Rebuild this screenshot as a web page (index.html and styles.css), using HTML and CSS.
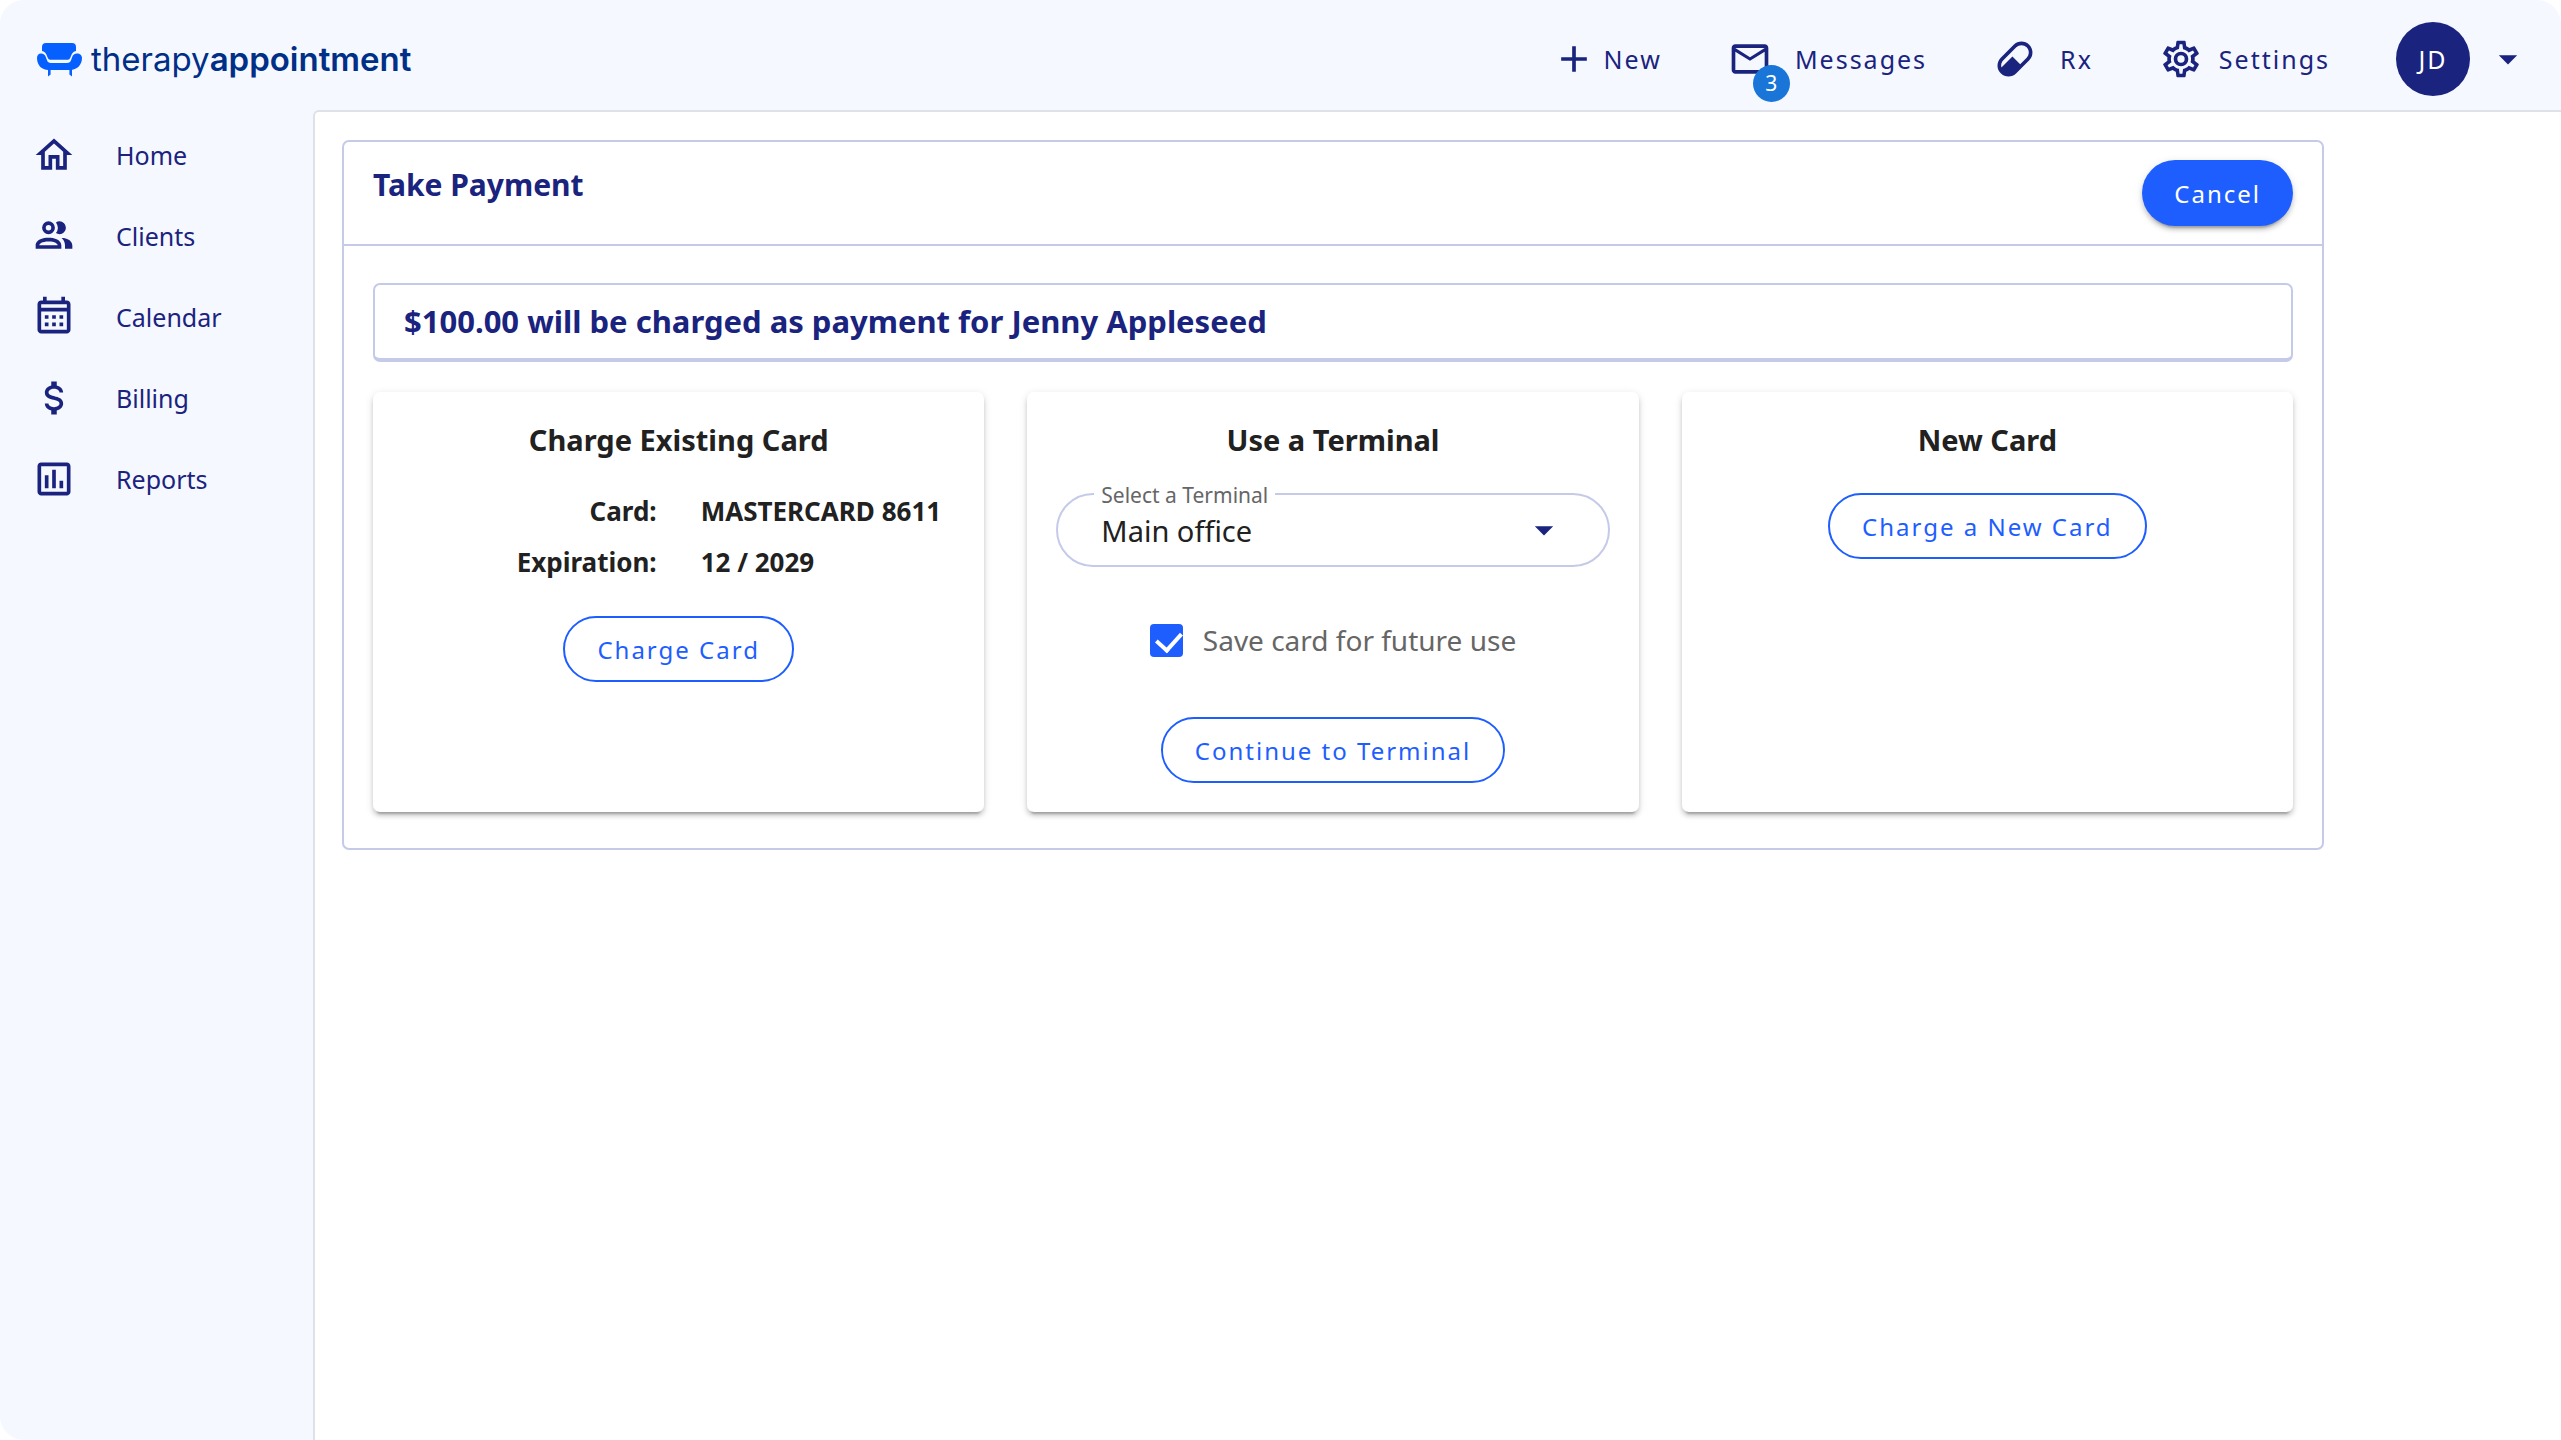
FILE: index.html
```html
<!DOCTYPE html>
<html lang="en">
<head>
  <meta charset="UTF-8" />
  <meta name="viewport" content="width=device-width, initial-scale=1.0" />
  <title>Take Payment - therapyappointment</title>
  <link rel="stylesheet" href="styles.css">
</head>
<body>
  <div class="app">
    <header class="topbar">
      <a href="#home" class="logo">
        <svg class="logo-mark" viewBox="0 0 47 35">
          <path d="M10 1h26a4 4 0 0 1 4 4v4c-2.500.6-3.800 2-4.800 4.500l-1 2.500a2.500 2.500 0 0 1-2.400 1.700H14.200a2.500 2.500 0 0 1-2.400-1.700l-1-2.500C9.800 11 8.500 9.600 6 9V5a4 4 0 0 1 4-4z"/>
          <path d="M5 11.500c2.600 0 4 1.200 4.800 3.500l1.200 3.200c.7 2 1.700 2.700 4 2.700h16c2.300 0 3.300-.7 4-2.700l1.200-3.200c.8-2.300 2.200-3.500 4.800-3.500 3 0 5 2 5 4.500C46 23 41 28 34 28H12.500C5.500 28 1 23 1 16c0-2.500 1.500-4.500 4-4.500z"/>
          <path d="M12 27h2.600v5.500L12 34.500zM36 27h-2.600v5.500l2.600 2z"/>
        </svg>
        <span>therapy<b>appointment</b></span>
      </a>

      <nav class="topnav">
        <a href="#new" class="snug">
          <svg class="icon" viewBox="0 0 24 24"><path d="M19,13H13V19H11V13H5V11H11V5H13V11H19V13Z"/></svg>
          New
        </a>
        <a href="#messages" class="loose">
          <span class="badge-wrap">
            <svg class="icon" viewBox="0 0 24 24"><path d="M22 6C22 4.900 21.100 4 20 4H4C2.900 4 2 4.900 2 6V18C2 19.100 2.900 20 4 20H20C21.100 20 22 19.100 22 18V6M20 6L12 11L4 6H20M20 18H4V8L12 13L20 8V18Z"/></svg>
            <span class="badge">3</span>
          </span>
          Messages
        </a>
        <a href="#rx" class="loose">
          <svg class="icon" viewBox="0 0 24 24"><path d="M4.220,11.290L11.290,4.220C13.640,1.880 17.430,1.880 19.780,4.220C22.120,6.560 22.120,10.360 19.780,12.710L12.710,19.780C10.360,22.120 6.560,22.120 4.220,19.780C1.880,17.430 1.880,13.640 4.220,11.290M5.640,12.710C4.590,13.750 4.240,15.240 4.600,16.570L10.590,10.590L14.830,14.830L18.360,11.290C19.930,9.730 19.930,7.200 18.360,5.640C16.800,4.070 14.270,4.070 12.710,5.640L5.640,12.710Z"/></svg>
          Rx
        </a>
        <a href="#settings">
          <svg class="icon" viewBox="0 0 24 24"><path d="M12,8A4,4 0 0,1 16,12A4,4 0 0,1 12,16A4,4 0 0,1 8,12A4,4 0 0,1 12,8M12,10A2,2 0 0,0 10,12A2,2 0 0,0 12,14A2,2 0 0,0 14,12A2,2 0 0,0 12,10M10,22C9.750,22 9.540,21.820 9.500,21.580L9.130,18.930C8.500,18.680 7.960,18.340 7.440,17.940L4.950,18.950C4.730,19.030 4.460,18.950 4.340,18.730L2.340,15.270C2.210,15.050 2.270,14.780 2.460,14.630L4.570,12.970L4.500,12L4.570,11L2.460,9.370C2.270,9.220 2.210,8.950 2.340,8.730L4.340,5.270C4.460,5.050 4.730,4.960 4.950,5.050L7.440,6.050C7.960,5.660 8.500,5.320 9.130,5.070L9.500,2.420C9.540,2.180 9.750,2 10,2H14C14.250,2 14.460,2.180 14.500,2.420L14.870,5.070C15.500,5.320 16.040,5.660 16.560,6.050L19.050,5.050C19.270,4.960 19.540,5.050 19.660,5.270L21.660,8.730C21.790,8.950 21.730,9.220 21.540,9.370L19.430,11L19.500,12L19.430,13L21.540,14.630C21.730,14.780 21.790,15.050 21.660,15.270L19.660,18.730C19.540,18.950 19.270,19.040 19.050,18.950L16.560,17.950C16.040,18.340 15.500,18.680 14.870,18.930L14.500,21.580C14.460,21.820 14.250,22 14,22H10M11.250,4L10.880,6.610C9.680,6.860 8.620,7.500 7.850,8.390L5.440,7.350L4.690,8.650L6.800,10.200C6.400,11.370 6.400,12.640 6.800,13.800L4.680,15.360L5.430,16.660L7.860,15.620C8.630,16.500 9.680,17.140 10.870,17.380L11.240,20H12.760L13.130,17.390C14.320,17.140 15.370,16.500 16.140,15.620L18.570,16.660L19.320,15.360L17.200,13.810C17.600,12.640 17.600,11.370 17.200,10.200L19.310,8.650L18.560,7.350L16.150,8.390C15.380,7.500 14.320,6.860 13.120,6.620L12.750,4H11.250Z"/></svg>
          Settings
        </a>
        <button type="button" class="account" aria-label="Account menu">
          <span class="avatar">JD</span>
          <svg class="icon" viewBox="0 0 24 24"><path d="M7,10L12,15L17,10H7Z"/></svg>
        </button>
      </nav>
    </header>

    <div class="layout">
      <nav class="sidebar">
        <a href="#home">
          <svg class="icon" viewBox="0 0 24 24"><path d="M12 5.690L17 10.190V18H15V12H9V18H7V10.190L12 5.690M12 3L2 12H5V20H11V14H13V20H19V12H22L12 3Z"/></svg>
          Home
        </a>
        <a href="#clients">
          <svg class="icon" viewBox="0 0 24 24"><path d="M13.070 10.410A5 5 0 0 0 13.070 4.590A3.390 3.390 0 0 1 15 4A3.500 3.500 0 0 1 15 11A3.390 3.390 0 0 1 13.070 10.410M5.500 7.500A3.500 3.500 0 1 1 9 11A3.500 3.500 0 0 1 5.500 7.500M7.500 7.500A1.500 1.500 0 1 0 9 6A1.500 1.500 0 0 0 7.500 7.500M16 17V19H2V17S2 13 9 13 16 17 16 17M14 17C13.860 16.220 12.670 15 9 15S4.070 16.310 4 17M15.950 13A5.320 5.320 0 0 1 18 17V19H22V17S22 13.370 15.940 13Z"/></svg>
          Clients
        </a>
        <a href="#calendar">
          <svg class="icon" viewBox="0 0 24 24"><path d="M7 11H9V13H7V11M21 5V19C21 20.110 20.110 21 19 21H5C3.890 21 3 20.100 3 19V5C3 3.900 3.900 3 5 3H6V1H8V3H16V1H18V3H19C20.110 3 21 3.900 21 5M5 5V7H19V5H5M19 19V9H5V19H19M15 13V11H17V13H15M11 13V11H13V13H11M7 15H9V17H7V15M15 17V15H17V17H15M11 17V15H13V17H11Z"/></svg>
          Calendar
        </a>
        <a href="#billing">
          <svg class="icon" viewBox="0 0 24 24"><path d="M7,15H9C9,16.080 10.370,17 12,17C13.630,17 15,16.080 15,15C15,13.900 13.960,13.500 11.760,12.970C9.640,12.440 7,11.780 7,9C7,7.210 8.470,5.690 10.500,5.180V3H13.500V5.180C15.530,5.690 17,7.210 17,9H15C15,7.920 13.630,7 12,7C10.370,7 9,7.920 9,9C9,10.100 10.040,10.500 12.240,11.030C14.360,11.560 17,12.220 17,15C17,16.790 15.530,18.310 13.500,18.820V21H10.500V18.820C8.470,18.310 7,16.790 7,15Z"/></svg>
          Billing
        </a>
        <a href="#reports">
          <svg class="icon" viewBox="0 0 24 24"><path d="M9 17H7V10H9V17M13 17H11V7H13V17M17 17H15V13H17V17M19 19H5V5H19V19.100M19 3H5C3.900 3 3 3.900 3 5V19C3 20.100 3.900 21 5 21H19C20.100 21 21 20.100 21 19V5C21 3.900 20.100 3 19 3Z"/></svg>
          Reports
        </a>
      </nav>

      <main class="content">
        <section class="panel">
          <div class="panel-header">
            <h1>Take Payment</h1>
            <button type="button" class="btn btn-primary">Cancel</button>
          </div>
          <div class="panel-body">
            <p class="notice">$100.00 will be charged as payment for Jenny Appleseed</p>

            <div class="cards">
              <div class="card">
                <h2>Charge Existing Card</h2>
                <dl class="details">
                  <dt>Card:</dt>
                  <dd>MASTERCARD 8611</dd>
                  <dt>Expiration:</dt>
                  <dd>12 / 2029</dd>
                </dl>
                <button type="button" class="btn btn-outline">Charge Card</button>
              </div>

              <div class="card">
                <h2>Use a Terminal</h2>
                <div class="field">
                  <label for="terminal">Select a Terminal</label>
                  <select id="terminal">
                    <option>Main office</option>
                  </select>
                  <svg class="field-caret" viewBox="0 0 24 24"><path d="M7,10L12,15L17,10H7Z"/></svg>
                </div>
                <div class="check">
                  <input type="checkbox" id="saveCard" checked>
                  <label for="saveCard">Save card for future use</label>
                </div>
                <button type="button" class="btn btn-outline">Continue to Terminal</button>
              </div>

              <div class="card">
                <h2>New Card</h2>
                <button type="button" class="btn btn-outline btn-first">Charge a New Card</button>
              </div>
            </div>
          </div>
        </section>
      </main>
    </div>
  </div>
</body>
</html>
```
FILE: styles.css
```css
* {
  box-sizing: border-box;
}
body {
  margin: 0;
  background: #fff;
  color: #212121;
  font-family: "Noto Sans", sans-serif;
  font-size: 25px;
}
h1, h2, p, dl, dd {
  margin: 0;
}
a {
  color: #1a237e;
  text-decoration: none;
}
button, select {
  font-family: inherit;
  cursor: pointer;
}
.icon {
  display: block;
  width: 44px;
  height: 44px;
  flex: none;
  fill: #1a237e;
}
.app {
  display: flex;
  flex-direction: column;
  min-height: 100vh;
  background: #f5f8ff;
  border-radius: 24px;
  overflow: hidden;
}

/* top bar */
.topbar {
  display: flex;
  align-items: center;
  justify-content: space-between;
  padding: 22px 31px 14px 36px;
}
.logo {
  display: flex;
  align-items: center;
  gap: 8px;
  color: #002f87;
  font-family: Inter, sans-serif;
  font-size: 33px;
}
.logo b {
  font-weight: 600;
}
.logo-mark {
  width: 47px;
  height: 35px;
  fill: #0560ff;
}
.topnav {
  display: flex;
  align-items: center;
  gap: 66px;
}
.topnav a {
  display: flex;
  align-items: center;
  gap: 16px;
  letter-spacing: 2px;
}
.topnav .snug {
  gap: 8px;
}
.topnav .loose {
  gap: 23px;
}
.badge-wrap {
  position: relative;
}
.badge {
  position: absolute;
  left: 25px;
  top: 28px;
  width: 37px;
  height: 37px;
  border-radius: 50%;
  background: #1976d8;
  color: #fff;
  font-size: 21px;
  line-height: 37px;
  letter-spacing: 0;
  text-align: center;
}
.account {
  display: flex;
  align-items: center;
  gap: 16px;
  padding: 0;
  border: none;
  background: none;
}
.avatar {
  width: 74px;
  height: 74px;
  border-radius: 50%;
  background: #1a237e;
  color: #fff;
  font-size: 25px;
  line-height: 74px;
  letter-spacing: 2px;
  text-align: center;
}

/* sidebar */
.layout {
  display: flex;
  flex: 1;
}
.sidebar {
  width: 313px;
  flex: none;
  padding: 4px 32px;
}
.sidebar a {
  display: flex;
  align-items: center;
  gap: 40px;
  height: 81px;
}

/* main content */
.content {
  flex: 1;
  padding: 28px 27px;
  background: #fff;
  border-top: 2px solid #e0e1e8;
  border-left: 2px solid #e0e1e8;
  border-top-left-radius: 6px;
}
.panel {
  max-width: 1982px;
  border: 2px solid #c5cae9;
  border-radius: 7px;
}
.panel-header {
  display: flex;
  align-items: flex-start;
  justify-content: space-between;
  padding: 18px 29px;
  border-bottom: 2px solid #c5cae9;
  color: #1a237e;
}
h1 {
  padding-top: 5px;
  font-size: 30px;
  line-height: 40px;
}
.panel-body {
  padding: 37px 29px 36px;
}
.notice {
  margin-bottom: 30px;
  padding: 16px 29px;
  border: 2px solid #c5cae9;
  border-bottom-width: 4px;
  border-radius: 7px;
  color: #1a237e;
  font-size: 31px;
  font-weight: bold;
  line-height: 41px;
}
.cards {
  display: grid;
  grid-template-columns: repeat(3, 1fr);
  gap: 43px;
}
.card {
  display: flex;
  flex-direction: column;
  align-items: center;
  padding: 29px;
  border-radius: 7px;
  box-shadow: 0 6px 2px -4px rgba(0,0,0,0.2), 0 4px 4px 0 rgba(0,0,0,0.14), 0 2px 9px 0 rgba(0,0,0,0.12);
}
.card h2 {
  margin-bottom: 28px;
  font-size: 29px;
  line-height: 37px;
}
.details {
  display: grid;
  grid-template-columns: 1fr 1fr;
  column-gap: 44px;
  width: 100%;
  margin-bottom: 28px;
  font-size: 26px;
  font-weight: bold;
  line-height: 51px;
}
.details dt {
  text-align: right;
}
.details dd {
  white-space: nowrap;
}

/* buttons */
.btn {
  height: 66px;
  padding: 0 32px;
  border: none;
  border-radius: 33px;
  font-size: 24px;
  letter-spacing: 2px;
}
.btn-primary {
  background: #1e5eff;
  color: #fff;
  box-shadow: 0 6px 2px -4px rgba(0,0,0,0.2), 0 4px 4px 0 rgba(0,0,0,0.14), 0 2px 9px 0 rgba(0,0,0,0.12);
}
.btn-outline {
  border: 2px solid #1e5eff;
  background: none;
  color: #1e5eff;
}
.btn-first {
  margin-top: 7px;
}

/* terminal form */
.field {
  position: relative;
  width: 100%;
  margin: 7px 0 56px;
}
.field label {
  position: absolute;
  left: 38px;
  top: -12px;
  padding: 0 7px;
  background: #fff;
  color: #666;
  font-size: 21px;
  line-height: 28px;
}
.field select {
  display: block;
  width: 100%;
  height: 74px;
  padding: 0 90px 0 43px;
  border: 2px solid #c5cae9;
  border-radius: 37px;
  background: none;
  color: #212121;
  font-size: 29px;
  appearance: none;
}
.field-caret {
  position: absolute;
  right: 44px;
  top: 15px;
  width: 44px;
  height: 44px;
  fill: #1a237e;
  pointer-events: none;
}
.check {
  display: flex;
  align-items: center;
  gap: 20px;
  margin-bottom: 60px;
  color: #666;
  font-size: 28px;
  line-height: 34px;
}
.check input {
  width: 33px;
  height: 33px;
  margin: 0;
  border-radius: 4px;
  background: #1e5eff;
  appearance: none;
}
.check input:checked::before {
  content: "";
  display: block;
  width: 12px;
  height: 20px;
  margin: 3px 0 0 11px;
  border: solid #fff;
  border-width: 0 4px 4px 0;
  transform: rotate(42deg);
}
```
